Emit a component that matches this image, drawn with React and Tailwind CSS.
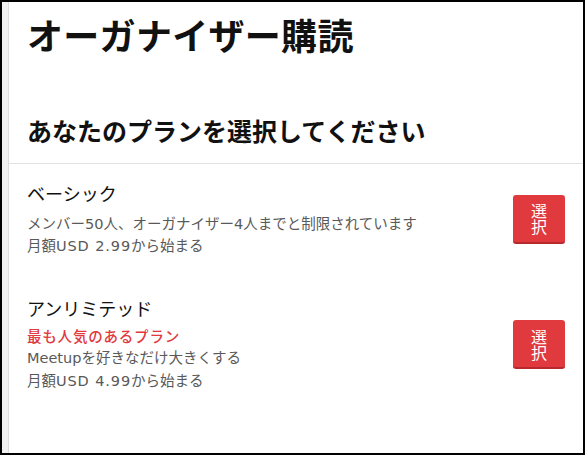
import React from "react";

const font = { fontFamily: '"Noto Sans CJK JP", "Noto Sans", sans-serif' };
const bodyFont = { fontFamily: '"DejaVu Sans", "Noto Sans CJK JP", sans-serif' };

function SelectButton() {
  return (
    <button className="w-[52px] h-[49px] shrink-0 rounded-[3px] bg-[#e0393e] border-b-2 border-[#b8292e] text-white flex items-center justify-center">
      <span className="block w-[16px] text-[16px] leading-[16px] break-all text-center" style={font}>選択</span>
    </button>
  );
}

export default function App() {
  return (
    <div
      className="w-[585px] h-[455px] border-2 border-black bg-white flex overflow-hidden"
      style={font}
    >
      <div className="w-[7px] h-full bg-[#f1f1f1] border-r border-[#dcdcdc] shrink-0" />
      <div className="flex-1 flex flex-col">
        <div className="pl-[18px] pt-[10px]">
          <h1 className="text-[36px] leading-[44px] font-bold text-[#111] tracking-[0.3px]">
            オーガナイザー購読
          </h1>
          <h2 className="mt-[58px] pb-[17px] text-[25px] leading-[32px] font-bold text-[#111]">
            あなたのプランを選択してください
          </h2>
        </div>
        <div className="h-px bg-[#e2e2e2]" />
        <div className="pl-[18px] pr-[18px] pt-[17px] flex flex-col gap-[39px]" style={bodyFont}>
          <div className="flex items-center justify-between">
            <div>
              <div className="text-[18px] leading-[24px] text-[#111]" style={font}>ベーシック</div>
              <div className="mt-[8px] text-[14.5px] leading-[22px] text-[#595959]">
                <div>メンバー50人、オーガナイザー4人までと制限されています</div>
                <div>月額<span className="tracking-[0.9px]">USD 2.99</span>から始まる</div>
              </div>
            </div>
            <SelectButton />
          </div>
          <div className="flex items-center justify-between">
            <div>
              <div className="text-[18px] leading-[24px] text-[#111]" style={font}>アンリミテッド</div>
              <div className="mt-[4px] text-[14.5px] leading-[23px] text-[#595959]">
                <div className="text-[#e0393e] font-medium tracking-[0.8px]" style={font}>最も人気のあるプラン</div>
                <div>Meetupを好きなだけ大きくする</div>
                <div>月額<span className="tracking-[0.9px]">USD 4.99</span>から始まる</div>
              </div>
            </div>
            <SelectButton />
          </div>
        </div>
      </div>
    </div>
  );
}
